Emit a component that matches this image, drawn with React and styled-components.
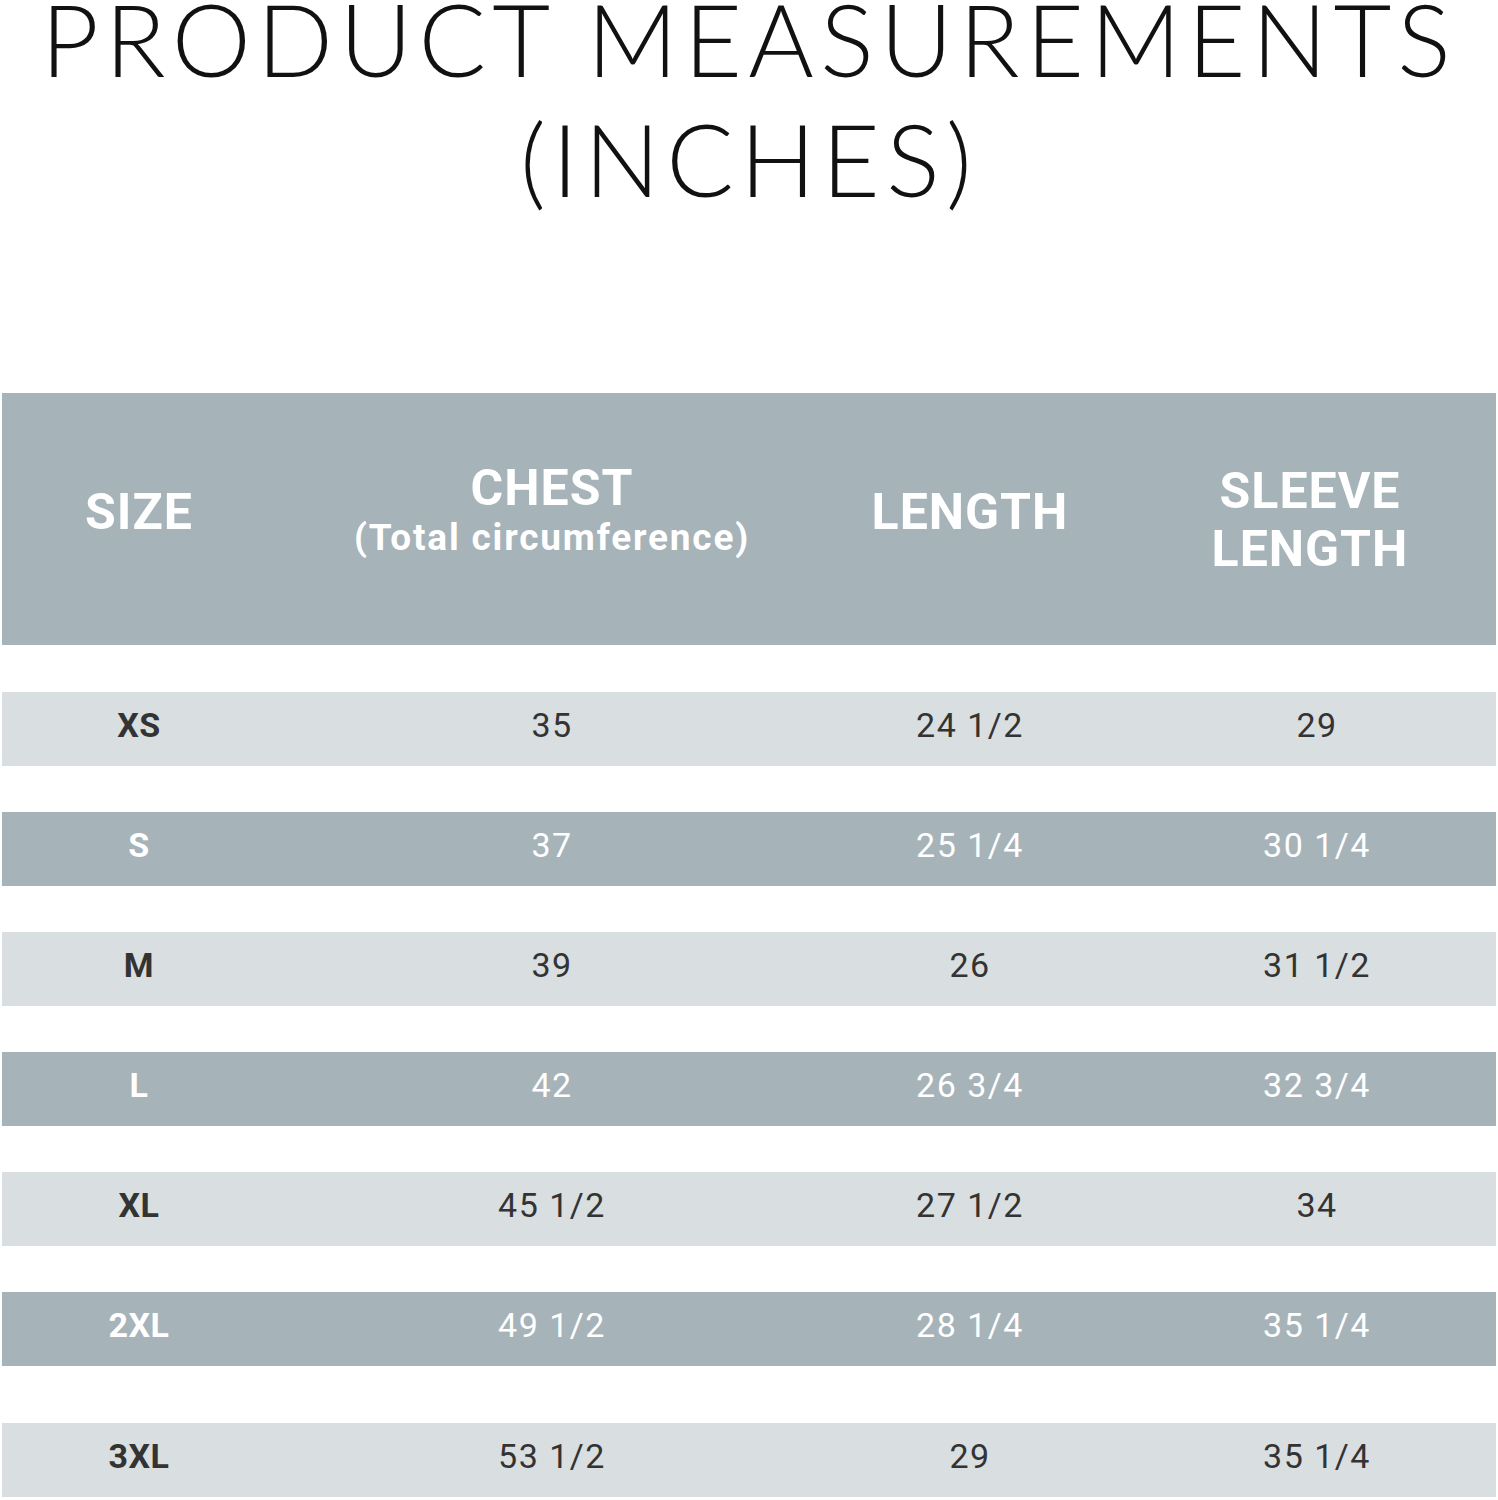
import React from "react";
import styled, { createGlobalStyle } from "styled-components";

const Global = createGlobalStyle`
  html, body { margin: 0; padding: 0; background: #ffffff; }
  body { width: 1498px; }
`;

const Page = styled.div`
  width: 1498px;
  height: 1500px;
  overflow: hidden;
  background: #ffffff;
  display: flex;
  flex-direction: column;
`;

const Title = styled.h1`
  margin: 0;
  height: 393px;
  font-family: "Lato", "Liberation Sans", sans-serif;
  font-weight: 300;
  font-size: 100px;
  letter-spacing: 6.3px;
  text-align: center;
  color: #111111;
`;

const TitleLine = styled.span`
  display: block;
  line-height: ${(p) => p.$lh}px;
  margin-top: ${(p) => p.$mt || 0}px;
`;

const Table = styled.div`
  margin-left: 2px;
  width: 1494px;
  display: flex;
  flex-direction: column;
  gap: 46px;
`;

const cols = "274px 552px 284px 384px";

const HeaderRow = styled.div`
  display: grid;
  grid-template-columns: ${cols};
  height: 252px;
  margin-bottom: 1px;
  background: #a6b3b9;
  align-items: center;
  color: #ffffff;
  font-family: "Roboto", "Liberation Sans", sans-serif;
  font-weight: 700;
  text-align: center;
`;

const HeadCell = styled.div`
  font-size: 50px;
  line-height: ${(p) => p.$lh || 56}px;
  letter-spacing: 1px;
  padding-left: ${(p) => p.$shift || 0}px;
  margin-top: ${(p) => (p.$mt === undefined ? -14 : p.$mt)}px;
`;

const Sub = styled.div`
  font-size: 37px;
  line-height: 48px;
  letter-spacing: 1.8px;
`;

const Row = styled.div`
  display: grid;
  grid-template-columns: ${cols};
  height: 74px;
  padding-bottom: 8px;
  box-sizing: border-box;
  align-items: center;
  text-align: center;
  background: ${(p) => (p.$dark ? "#a6b3b9" : "#d9dee1")};
  color: ${(p) => (p.$dark ? "#ffffff" : "#333333")};
  font-family: "Roboto", "Liberation Sans", sans-serif;
  margin-top: ${(p) => p.$extra || 0}px;
`;

const SizeCell = styled.div`
  font-weight: 700;
  font-size: 34px;
  letter-spacing: 0.5px;
`;

const ValueCell = styled.div`
  font-weight: 400;
  font-size: 34px;
  letter-spacing: 1.5px;
  padding-left: ${(p) => p.$shift || 0}px;
`;

const data = [
  ["XS", "35", "24 1/2", "29"],
  ["S", "37", "25 1/4", "30 1/4"],
  ["M", "39", "26", "31 1/2"],
  ["L", "42", "26 3/4", "32 3/4"],
  ["XL", "45 1/2", "27 1/2", "34"],
  ["2XL", "49 1/2", "28 1/4", "35 1/4"],
  ["3XL", "53 1/2", "29", "35 1/4"],
];

export default function App() {
  return (
    <Page>
      <Global />
      <Title>
        <TitleLine $lh={77}>PRODUCT MEASUREMENTS</TitleLine>
        <TitleLine $lh={120} $mt={21}>(INCHES)</TitleLine>
      </Title>
      <Table>
        <HeaderRow>
          <HeadCell>SIZE</HeadCell>
          <HeadCell $lh={52}>
            CHEST
            <Sub>(Total circumference)</Sub>
          </HeadCell>
          <HeadCell>LENGTH</HeadCell>
          <HeadCell $lh={58} $shift={12} $mt={2}>
            SLEEVE
            <br />
            LENGTH
          </HeadCell>
        </HeaderRow>
        {data.map((r, i) => (
          <Row key={r[0]} $dark={i % 2 === 1} $extra={i === 6 ? 11 : 0}>
            <SizeCell>{r[0]}</SizeCell>
            <ValueCell>{r[1]}</ValueCell>
            <ValueCell>{r[2]}</ValueCell>
            <ValueCell $shift={26}>{r[3]}</ValueCell>
          </Row>
        ))}
      </Table>
    </Page>
  );
}
